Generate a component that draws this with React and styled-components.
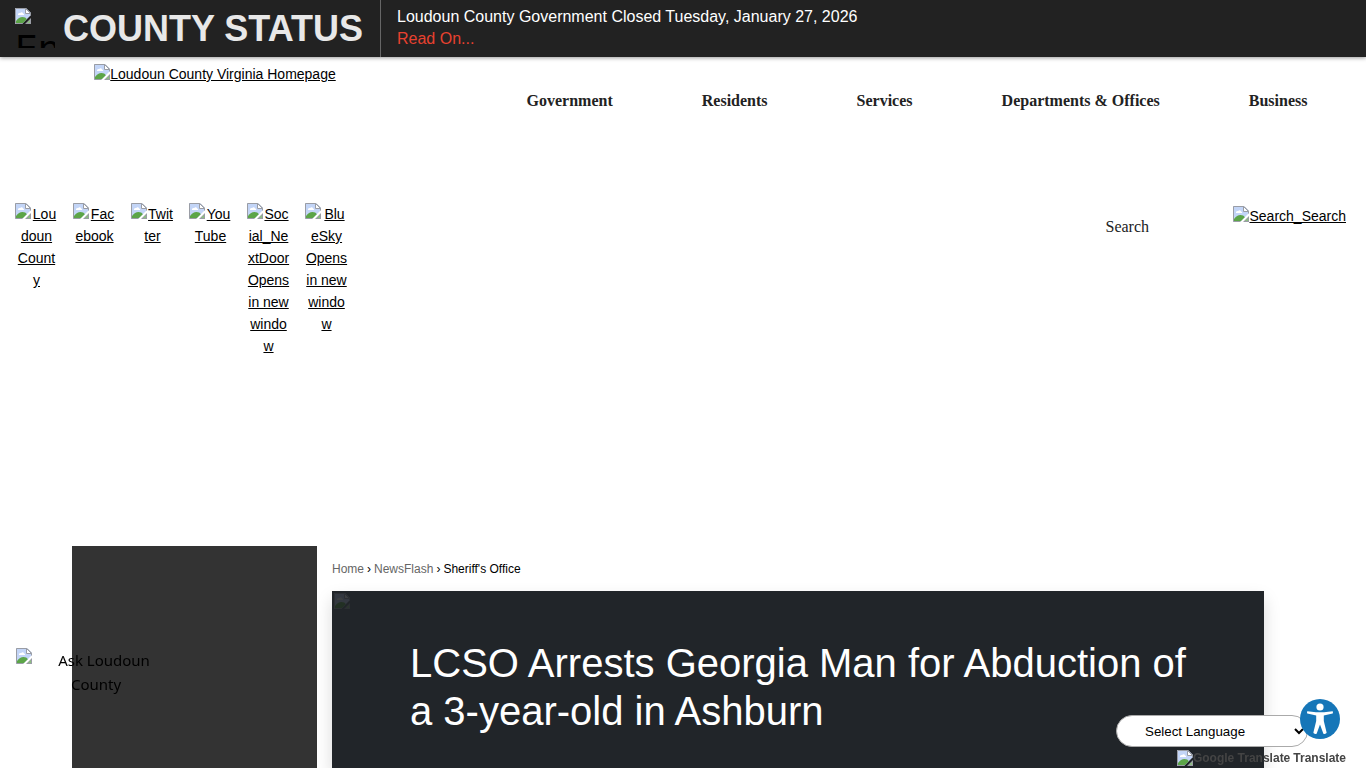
import React, { useState } from 'react';
import styled, { createGlobalStyle } from 'styled-components';

const GlobalStyle = createGlobalStyle`
  *, *::before, *::after {
    box-sizing: border-box;
  }

  body {
    margin: 0;
    background: #fff;
    color: #000;
    font-family: "Liberation Sans", Arial, sans-serif;
    font-size: 14px;
    line-height: 22px;
  }
`;

const Page = styled.div`
  display: flex;
  flex-direction: column;
  min-height: 100vh;
`;

/* Alert bar */

const AlertBar = styled.section`
  display: flex;
  min-height: 57px;
  background: #222;
  box-shadow: 0 1px 4px rgba(0, 0, 0, 0.4);
`;

const AlertHeading = styled.div`
  display: flex;
  gap: 8px;
  padding: 8px 17px 8px 15px;
  border-right: 1px solid #666;

  h2 {
    margin: 0;
    color: #e8e8e8;
    font-size: 36px;
    line-height: 41px;
    white-space: nowrap;
  }
`;

const AlertIcon = styled.div`
  width: 40px;
  height: 40px;
  overflow: hidden;
  color: #000;
  font-family: "DejaVu Sans", sans-serif;
  font-size: 36px;
  line-height: 50px;
`;

const AlertBody = styled.div`
  padding: 6px 16px;
  color: #fff;
  font-size: 16px;

  a {
    display: block;
    width: max-content;
    color: #e8412f;
    text-decoration: none;
  }
`;

/* Site header */

const Header = styled.header`
  display: grid;
  grid-template-columns: 430px 1fr;
  grid-template-rows: 140px auto;
  padding: 6px 0 189px;
`;

const TextLink = styled.a`
  color: #000;
`;

const LogoCell = styled.div`
  text-align: center;
`;

const Nav = styled.nav`
  display: flex;
  justify-content: space-around;
  align-items: flex-start;
  padding: 27px 14px 0 52px;

  a {
    color: #222;
    font-family: "Liberation Serif", "Times New Roman", serif;
    font-size: 16px;
    font-weight: bold;
    text-decoration: none;
    white-space: nowrap;
  }
`;

const SocialList = styled.ul`
  display: flex;
  gap: 15px;
  margin: 0;
  padding: 0 0 0 15px;
  list-style: none;

  li {
    width: 43px;
    text-align: center;
    word-break: break-all;
  }
`;

const SearchForm = styled.form`
  display: flex;
  justify-content: flex-end;
  align-items: flex-start;
  gap: 16px;
  padding: 2px 20px 0 0;

  input {
    width: 120px;
    margin-top: 6px;
    padding: 4px 8px;
    border: 0;
    background: transparent;
    font-family: "Liberation Serif", "Times New Roman", serif;
    font-size: 16px;
    line-height: 24px;
  }

  input::placeholder {
    color: #222;
    opacity: 1;
  }
`;

/* Main area */

const Main = styled.main`
  display: flex;
  flex: 1;
  padding: 0 102px 0 72px;
`;

const Sidebar = styled.aside`
  width: 245px;
  background: #333;
`;

const Content = styled.div`
  display: flex;
  flex: 1;
  flex-direction: column;
  padding-left: 15px;
`;

const Breadcrumbs = styled.ol`
  display: flex;
  gap: 3px;
  margin: 0;
  padding: 12px 0 11px;
  font-size: 12px;
  list-style: none;

  li + li::before {
    content: '›';
    margin-right: 3px;
  }

  a {
    color: #666;
    text-decoration: none;
  }
`;

const Hero = styled.article`
  position: relative;
  flex: 1;
  padding: 48px 48px 0 78px;
  background: #212529;
  box-shadow: 0 8px 16px rgba(0, 0, 0, 0.15);

  h1 {
    margin: 0;
    color: #fff;
    font-size: 40px;
    font-weight: normal;
    line-height: 48px;
  }
`;

const HeroImage = styled.span`
  position: absolute;
  top: 2px;
  left: 2px;
  display: flex;
  filter: brightness(0.4);
  opacity: 0.4;
`;

/* Floating widgets */

const AskWidget = styled.a`
  position: fixed;
  bottom: 72px;
  left: 16px;
  width: 160px;
  color: #000;
  font-family: "Noto Sans", sans-serif;
  font-size: 15px;
  line-height: 24px;
  text-align: center;
  text-decoration: none;
`;

const TranslateWidget = styled.div`
  position: fixed;
  right: 20px;
  bottom: 0;
  color: #444;
  font-size: 12px;
  font-weight: bold;
  line-height: 20px;

  select {
    display: block;
    width: 192px;
    height: 32px;
    margin: 0 38px 1px auto;
    padding: 0 0 0 24px;
    border: 1px solid #aaa;
    border-radius: 16px;
    background: #fff;
    color: #000;
    font-family: "Liberation Sans", Arial, sans-serif;
  }
`;

const TranslateCaption = styled.div`
  display: flex;
  justify-content: flex-end;
  gap: 3px;

  svg {
    vertical-align: -4px;
  }
`;

const AccessButton = styled.button`
  position: fixed;
  right: 26px;
  bottom: 29px;
  width: 40px;
  height: 40px;
  padding: 0;
  border: 0;
  border-radius: 50%;
  background: #1676b8;
  cursor: pointer;

  svg {
    display: block;
  }
`;

const IconSvg = styled.svg`
  float: ${({ $float }) => ($float ? 'left' : 'none')};
  vertical-align: ${({ $float }) => ($float ? 'baseline' : '-1px')};
`;

const MissingImage = ({ float }) => (
  <IconSvg $float={float} width="16" height="16" viewBox="0 0 16 16" aria-hidden="true">
    <path d="M0 0H11L16 5V7L7 16H0Z" fill="#c3d5f7" />
    <path d="M3 7C2.6 5.4 4 4.6 5.2 5C6 3.6 8 4 8 5.6C9 5.6 9.4 6.4 9 7Z" fill="#fff" />
    <path d="M1 15V13C3 10.5 5 9 7.5 9C9.5 9 11 9.7 11.8 11.2L8 15Z" fill="#5ca548" />
    <path d="M7.5 15.5H0.5V0.5H11L15.5 5V7.5" fill="none" stroke="#9a9da5" />
    <path d="M10.5 0.5V5.5H15.5Z" fill="#fff" stroke="#9a9da5" strokeLinejoin="round" />
    <path d="M16 10V16H10Z" fill="#9a9da5" />
    <path d="M15 12V15H12Z" fill="#8cc07e" />
  </IconSvg>
);

const navItems = ['Government', 'Residents', 'Services', 'Departments & Offices', 'Business'];

const socialItems = [
  'Loudoun County',
  'Facebook',
  'Twitter',
  'YouTube',
  'Social_NextDoor Opens in new window',
  'BlueSky Opens in new window',
];

const App = () => {
  const [query, setQuery] = useState('');
  const [language, setLanguage] = useState('');

  return (
    <Page>
      <GlobalStyle />

      <AlertBar>
        <AlertHeading>
          <AlertIcon>
            <MissingImage float />
            En
          </AlertIcon>
          <h2>COUNTY STATUS</h2>
        </AlertHeading>
        <AlertBody>
          Loudoun County Government Closed Tuesday, January 27, 2026
          <a href="#alert">Read On...</a>
        </AlertBody>
      </AlertBar>

      <Header>
        <LogoCell>
          <TextLink href="#home">
            <MissingImage />
            Loudoun County Virginia Homepage
          </TextLink>
        </LogoCell>
        <Nav>
          {navItems.map((item) => (
            <a key={item} href="#nav">{item}</a>
          ))}
        </Nav>
        <SocialList>
          {socialItems.map((item) => (
            <li key={item}>
              <TextLink href="#social">
                <MissingImage float />
                {item}
              </TextLink>
            </li>
          ))}
        </SocialList>
        <SearchForm onSubmit={(e) => e.preventDefault()}>
          <input
            type="text"
            aria-label="Search"
            placeholder="Search"
            value={query}
            onChange={(e) => setQuery(e.target.value)}
          />
          <TextLink href="#search">
            <MissingImage />
            Search_Search
          </TextLink>
        </SearchForm>
      </Header>

      <Main>
        <Sidebar />
        <Content>
          <Breadcrumbs>
            <li><a href="#home">Home</a></li>
            <li><a href="#newsflash">NewsFlash</a></li>
            <li>Sheriff's Office</li>
          </Breadcrumbs>
          <Hero>
            <HeroImage>
              <MissingImage />
            </HeroImage>
            <h1>LCSO Arrests Georgia Man for Abduction of a 3-year-old in Ashburn</h1>
          </Hero>
        </Content>
      </Main>

      <AskWidget href="#ask">
        <MissingImage float />
        Ask Loudoun County
      </AskWidget>

      <TranslateWidget>
        <select
          aria-label="Select Language"
          value={language}
          onChange={(e) => setLanguage(e.target.value)}
        >
          <option value="">Select Language</option>
          <option value="es">Spanish</option>
          <option value="ko">Korean</option>
        </select>
        <TranslateCaption>
          <span>
            <MissingImage />
            Google Translate
          </span>
          <span>Translate</span>
        </TranslateCaption>
      </TranslateWidget>

      <AccessButton type="button" aria-label="Accessibility options">
        <svg width="40" height="40" viewBox="0 0 40 40" fill="#fff">
          <circle cx="20" cy="8" r="3.6" />
          <path d="M7.5 12.2C7 12.1 6.8 14.4 7.4 14.5L16.2 16.6V22L13.4 33.6C13.2 34.8 16.2 35.5 16.7 34.4L20 25.5L23.3 34.4C23.8 35.5 26.8 34.8 26.6 33.6L23.8 22V16.6L32.6 14.5C33.2 14.4 33 12.1 32.5 12.2L24 13.3H16Z" />
        </svg>
      </AccessButton>
    </Page>
  );
};

export default App;
